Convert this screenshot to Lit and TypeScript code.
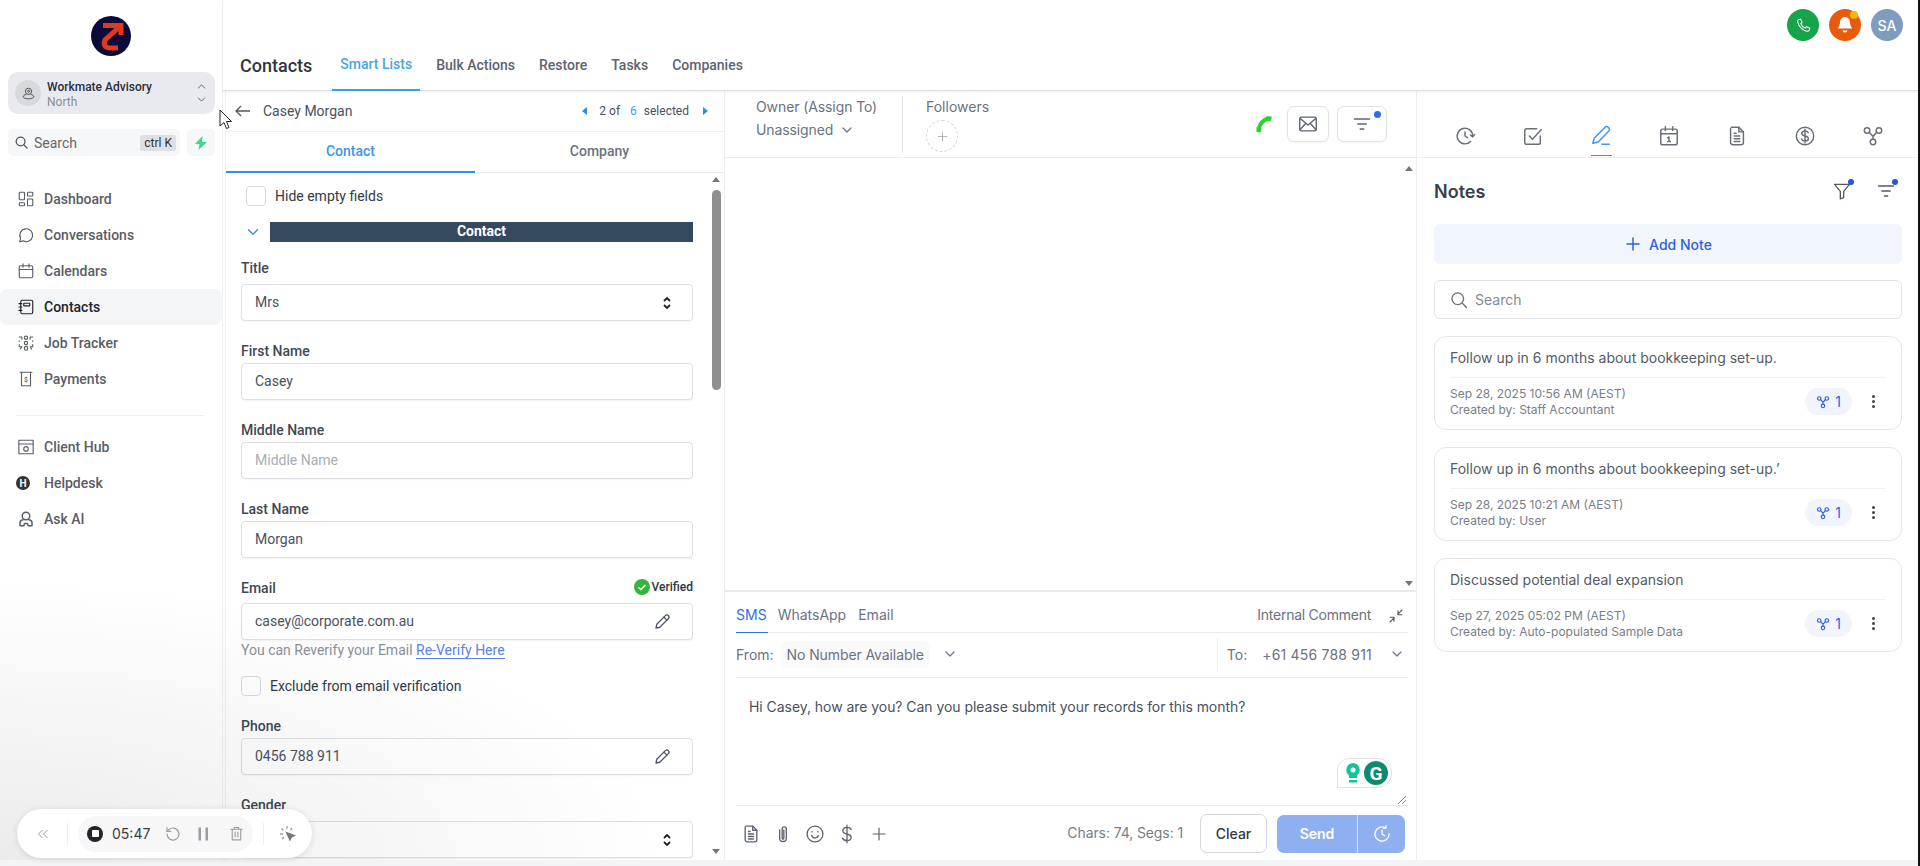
import { LitElement, html, css, svg } from "lit";
import { customElement } from "lit/decorators.js";

const ic = (inner: unknown, size = 16, vb = 24, sw = 1.6) => html`<svg width=${size} height=${size} viewBox="0 0 ${vb} ${vb}" fill="none" stroke="currentColor" stroke-width=${sw} stroke-linecap="round" stroke-linejoin="round">${inner}</svg>`;

const I = {
  dash: svg`<rect x="3" y="3" width="7" height="10" rx="1"/><rect x="14" y="3" width="7" height="5" rx="1"/><rect x="14" y="12" width="7" height="9" rx="1"/><rect x="3" y="17" width="7" height="4" rx="1"/>`,
  chat: svg`<path d="M3.5 21l1.3-4.4A8.6 8.6 0 1 1 8 19.8L3.5 21z"/>`,
  cal: svg`<rect x="3" y="5" width="18" height="16" rx="2"/><path d="M3 10h18M8 2.5V7M16 2.5V7"/>`,
  contacts: svg`<rect x="5" y="3" width="16" height="18" rx="2"/><path d="M2.5 7.5h4M2.5 12h4M2.5 16.5h4"/><rect x="9" y="7" width="8" height="3.5" rx=".5"/>`,
  job: svg`<circle cx="12" cy="5" r="2.2"/><circle cx="12" cy="12" r="2.2"/><rect x="10" y="16.5" width="4" height="5" rx="1.5"/><path d="M3 4h3.5v3M3 10v-1M21 4h-3.5v3M21 10V9M3 14v3h3.5l-2 3M21 14v3h-3.5l2 3"/>`,
  pay: svg`<path d="M4 3h16M6 3v18h12V3"/><text x="12" y="15.5" font-size="9" text-anchor="middle" fill="currentColor" stroke="none" font-family="Roboto">$</text>`,
  hub: svg`<rect x="2.5" y="3" width="19" height="18"/><path d="M2.5 8h19"/><circle cx="12" cy="14.5" r="3"/>`,
  ask: svg`<circle cx="12" cy="8" r="5"/><path d="M8 13c-3 .5-4 2-4 4v4h5l1-3h4l1 3h5v-4c0-2-1-3.500-4-4"/>`,
  search: svg`<circle cx="10.5" cy="10.5" r="7"/><path d="M16 16l5 5"/>`,
  up: svg`<path d="M6 15l6-6 6 6"/>`,
  down: svg`<path d="M6 9l6 6 6-6"/>`,
  pin: svg`<circle cx="12" cy="8.5" r="5"/><circle cx="12" cy="8.5" r="1.6"/><path d="M8 13.500c-2.500.7-4.500 2-4.500 3.500 0 2 3.800 3.500 8.500 3.500s8.500-1.500 8.500-3.500c0-1.500-2-2.800-4.500-3.500"/>`,
  pencil: svg`<path d="M4 20l1-5L16.500 3.500a2.800 2.800 0 0 1 4 4L9 19l-5 1z"/><path d="M14.500 5.500l4 4"/>`,
  mail: svg`<rect x="3" y="4.500" width="18" height="15" rx="2"/><path d="M3.500 6l8.500 7 8.500-7M3.500 18l6-6.500M20.500 18l-6-6.500"/>`,
  sort: svg`<path d="M3 6h18M7 12h10M10 18h4"/>`,
  plus: svg`<path d="M12 4v16M4 12h16"/>`,
  history: svg`<path d="M20.500 12a8.500 8.500 0 1 0-2.400 6"/><path d="M12 7.500V12l3 2M22.500 10.500L20.500 13l-2.500-2"/>`,
  task: svg`<path d="M20 12v7a2 2 0 0 1-2 2H5a2 2 0 0 1-2-2V6a2 2 0 0 1 2-2h11"/><path d="M8 12l3.500 3.500L21 5"/>`,
  pen: svg`<path d="M3 20l1.500-5.500L16 3a2.800 2.800 0 0 1 4.500 3.500L9 18.500 3 20z"/><path d="M13 21h8"/>`,
  calOne: svg`<rect x="3" y="4.500" width="18" height="17" rx="2"/><path d="M3 9.500h18M8 2v4M16 2v4M10.500 14l1.500-1v5M10.500 18h3"/>`,
  doc: svg`<path d="M6 2.500h8l5 5V19a2.500 2.500 0 0 1-2.500 2.500h-9A2.500 2.500 0 0 1 5 19V3.500"/><path d="M14 2.500v5h5M9 12h6M9 15h6M9 18h6M9 9h2"/>`,
  dollar: svg`<circle cx="12" cy="12" r="9.500"/><path d="M15.500 8.500c-.5-1.300-2-2-3.500-2-2 0-3.500 1-3.500 2.700 0 3.800 7.200 1.800 7.200 5.600 0 1.700-1.700 2.700-3.700 2.700-1.600 0-3.200-.8-3.700-2.200M12 4.500v15"/>`,
  graph: svg`<circle cx="5.500" cy="6" r="3"/><circle cx="18.500" cy="6" r="3"/><circle cx="12" cy="18.500" r="3"/><path d="M8 8l3 3.500M16 8l-3 3.500M12 11.500v4"/>`,
  filter: svg`<path d="M3 4h18l-7 8.500V20l-4 1.500v-9L3 4z"/>`,
  phone: svg`<path d="M7 3l2.500 5-2 2c1 2.800 3.700 5.500 6.500 6.500l2-2 5 2.500-1 3c-.5 1.200-1.500 1.500-3 1.300C10 20 4 14 2.700 7c-.2-1.500.1-2.500 1.300-3z" transform="translate(1.200 0)"/>`,
  collapse: svg`<path d="M21 3l-6.500 6.500M15 4v6h6M3 21l6.500-6.500M9 20v-6H3"/>`,
  clip: svg`<path d="M8 7v10a4 4 0 0 0 8 0V6a2.500 2.500 0 0 0-5 0v11a1 1 0 0 0 2 0V7"/>`,
  smile: svg`<circle cx="12" cy="12" r="9.500"/><path d="M8 14c1 2 2.500 3 4 3s3-1 4-3M8.500 9v.5M15.500 9v.5"/>`,
  usd: svg`<path d="M17 6.500C16 4.500 14 4 12 4 9 4 7 5.500 7 8c0 5.500 10 2.500 10 8 0 2.500-2 4-5 4-2.500 0-4.500-1-5.500-3M12 1.500v21"/>`,
  clock: svg`<path d="M20.500 12a8.500 8.500 0 1 1-4-7.200"/><path d="M12 7.500V12l3 2M17 2l-.5 3-3-.2"/>`,
  retry: svg`<path d="M4 12a8 8 0 1 0 2.500-5.800L4 8.500"/><path d="M4 3.500v5h5"/>`,
  trash: svg`<path d="M4 6h16M9 6V3.500h6V6M6 6v15h12V6M10 10v7M14 10v7"/>`,
};

const navTop = [
  ["Dashboard", I.dash], ["Conversations", I.chat], ["Calendars", I.cal],
  ["Contacts", I.contacts], ["Job Tracker", I.job], ["Payments", I.pay],
] as const;
const navBottom = [["Client Hub", I.hub], ["Helpdesk", null], ["Ask AI", I.ask]] as const;

const notes = [
  ["Follow up in 6 months about bookkeeping set-up.", "Sep 28, 2025 10:56 AM (AEST)", "Created by: Staff Accountant"],
  ["Follow up in 6 months about bookkeeping set-up.’", "Sep 28, 2025 10:21 AM (AEST)", "Created by: User"],
  ["Discussed potential deal expansion", "Sep 27, 2025 05:02 PM (AEST)", "Created by: Auto-populated Sample Data"],
];

@customElement("app-root")
export class AppRoot extends LitElement {
  static styles = css`
    :host { display: block; width: 1920px; height: 866px; position: relative; overflow: hidden; background: #111; font-family: Roboto, sans-serif; color: #374151; }
    * { box-sizing: border-box; }
    svg { display: block; flex: none; }
    .app { width: 1918px; height: 866px; display: flex; background: #fff; position: relative; overflow: hidden; }

    .side { width: 223px; flex: none; border-right: 1px solid #f1f1f3; padding-top: 16px; display: flex; flex-direction: column; }
    .logo { align-self: center; width: 40px; height: 40px; }
    .org { margin: 16px 7px 0 8px; height: 42px; background: #e9eaf0; border-radius: 10px; display: flex; align-items: center; padding: 0 8px 0 7px; }
    .org-av { width: 26px; height: 26px; border-radius: 50%; background: #d8d9de; color: #555; display: grid; place-items: center; }
    .org-t { flex: 1; margin-left: 6px; line-height: 15px; padding-top: 3px; }
    .org-n { font-size: 12px; font-weight: 500; color: #2a2f3a; }
    .org-s { font-size: 12px; color: #8a8d95; }
    .org-c { color: #666; display: flex; flex-direction: column; margin-right: -1px; }
    .srow { display: flex; gap: 7px; margin: 15px 7px 0 8px; height: 27px; }
    .sbox { flex: 1; background: #f6f7f9; border-radius: 5px; display: flex; align-items: center; padding: 0 4px 0 6px; color: #555; font-size: 14px; }
    .sbox span.t { flex: 1; margin-left: 5px; color: #666; }
    .kbd { background: #dfe0e5; font-size: 12px; line-height: 16px; padding: 0 4px; color: #333; border-radius: 2px; }
    .bolt { width: 28px; background: #f6f7f9; border-radius: 5px; display: grid; place-items: center; }
    .nav { margin-top: 25px; }
    .item { height: 36px; display: flex; align-items: center; padding-left: 17px; gap: 9px; font-size: 14px; font-weight: 500; color: #5a5d66; }
    .item.on { background: #f4f5f7; color: #20242c; border-radius: 8px; }
    .h { border-radius: 50%; background: #333; color: #fff; font-size: 10px; font-weight: 700; display: grid; place-items: center; flex: none; width: 14px; height: 14px; margin: 0 5px 0 -1px; }
    .sep { height: 1px; background: #eeeff1; margin: 18px 17px 13px 16px; }

    .main { flex: 1; min-width: 0; display: flex; flex-direction: column; }
    .head { height: 91px; flex: none; border-bottom: 1px solid #dcdde0; box-shadow: 0 1px 2px #00000012; position: relative; z-index: 2; background: #fff; }
    .tops { display: flex; justify-content: flex-end; gap: 10px; padding: 9px 15px 0 0; height: 48px; }
    .circ { width: 32px; height: 32px; border-radius: 50%; display: grid; place-items: center; color: #fff; position: relative; font: 500 14px Inter, sans-serif; }
    .badge { position: absolute; width: 8px; height: 8px; border-radius: 50%; background: #f5b50a; top: 2px; right: 3px; }
    .tabs { display: flex; align-items: flex-end; height: 43px; padding-left: 17px; }
    .ttl { font-size: 18px; font-weight: 500; color: #2f3540; align-self: center; margin: 0 20px 0 0; padding-bottom: 9px; }
    .tab { height: 43px; padding: 9px 8px 0; font-size: 14px; font-weight: 500; color: #5d6470; margin-right: 8px; }
    .tab.on { color: #4aa5e0; border-bottom: 2px solid #3b9fe0; padding-top: 8px; margin-right: 8px; }

    .panels { flex: 1; min-height: 0; display: flex; }
    .left { width: 500px; flex: none; margin-left: 2px; border-right: 1px solid #eceef1; border-left: 1px solid #f1f1f3; display: flex; flex-direction: column; position: relative; overflow: hidden; }
    .chead { height: 41px; flex: none; border-bottom: 1px solid #eff0f2; display: flex; align-items: center; padding-left: 9px; color: #4a5160; font-size: 14px; }
    .chead .nm { margin-left: 13px; flex: 1; }
    .pg { display: flex; align-items: center; font-size: 12px; color: #4a5160; margin-right: 16px; gap: 6px; }
    .pg b { font-weight: 400; color: #3b9fe0; margin: 0 1px 0 4px; }
    .tri { width: 0; height: 0; border: 4px solid transparent; }
    .tri.l { border-right: 5px solid #2b8fd8; border-left: 0; margin-right: 6px; }
    .tri.r { border-left: 5px solid #2b8fd8; border-right: 0; margin-left: 8px; }
    .ctabs { height: 41px; flex: none; display: flex; border-bottom: 1px solid #e8e9ec; }
    .ctab { flex: 1; text-align: center; font-size: 14px; font-weight: 500; color: #6b7280; padding-top: 11px; }
    .ctab.on { color: #3b96ef; border-bottom: 2px solid #2f8ff0; margin-bottom: -1px; }
    .form { flex: 1; min-height: 0; padding: 13px 0 0 15px; overflow: hidden; width: 467px; }
    .check { display: flex; align-items: center; gap: 9px; font-size: 14px; color: #333a45; height: 20px; }
    .box { width: 20px; height: 20px; border: 1px solid #d8dade; border-radius: 4px; background: #fff; flex: none; }
    .hide { padding-left: 5px; }
    .sect { margin-top: 16px; display: flex; align-items: center; height: 20px; }
    .sect .cv { width: 29px; padding-left: 3px; color: #2f8ff0; }
    .bar { flex: 1; height: 20px; background: #34485e; color: #fff; font-size: 14px; font-weight: 700; text-align: center; line-height: 19px; }
    .field { margin-top: 20px; }
    .field.first { margin-top: 16px; }
    .lab { font-size: 14px; font-weight: 500; color: #3f4854; line-height: 20px; margin-bottom: 2px; display: flex; justify-content: space-between; }
    .lab.g5 { margin-bottom: 5px; }
    .lab.g6 { margin-bottom: 6px; }
    .verified { display: flex; align-items: center; gap: 2px; font-size: 12px; color: #2f3540; margin-top: -2px; font-weight: 500; }
    .inp { height: 37px; border: 1px solid #dddfe3; border-radius: 4px; display: flex; align-items: center; padding: 0 13px 2px; font-size: 14px; color: #4a5160; box-shadow: 0 1px 2px #0000000d; background: #fff; justify-content: space-between; }
    .inp.ph { color: #a9adb5; }
    .inp .ed { color: #4a5160; margin-right: 8px; margin-top: 2px; }
    .inp .sl { margin-right: 7px; margin-top: 2px; }
    .help { font-size: 14px; color: #8a8f98; line-height: 20px; }
    .help a { color: #5a82e6; border-bottom: 1px solid #5a82e6; }
    .ex { margin-top: 16px; }

    .mid { width: 692px; flex: none; border-right: 1px solid #eceef1; display: flex; flex-direction: column; position: relative; font-family: Inter, sans-serif; }
    .mtop { height: 67px; flex: none; border-bottom: 1px solid #eceef1; display: flex; align-items: flex-start; padding: 5px 29px 0 31px; color: #6b7280; font-size: 14px; }
    .own { width: 147px; height: 57px; border-right: 1px solid #e5e7eb; line-height: 20px; padding-top: 1px; letter-spacing: -.1px; }
    .own .u { margin-top: 3px; display: flex; align-items: center; gap: 6px; }
    .fol { margin-left: 23px; line-height: 20px; padding-top: 1px; flex: 1; }
    .add { width: 32px; height: 32px; margin-top: 3px; border: 1px dashed #d4d6da; border-radius: 50%; display: grid; place-items: center; color: #a4a8af; }
    .tool { display: flex; align-items: center; gap: 8px; margin-top: 10px; }
    .tbtn { height: 36px; border: 1px solid #e0e2e6; border-radius: 7px; display: grid; place-items: center; color: #5d6470; position: relative; box-shadow: 0 1px 2px #0000000d; }
    .tbtn.a { width: 42px; margin-left: 5px; }
    .tbtn.b { width: 50px; }
    .dot { position: absolute; width: 7px; height: 7px; border-radius: 50%; background: #2f6fec; top: 4px; right: 5px; }
    .msgs { flex: 1; min-height: 0; }
    .comp { height: 276px; flex: none; border-top: 2px solid #e8e9ec; display: flex; flex-direction: column; padding: 0 8px 0 11px; font-size: 14px; color: #6b7280; }
    .ctl { height: 41px; flex: none; display: flex; align-items: flex-start; border-bottom: 1px solid #e8e9ec; padding-top: 14px; gap: 10px; }
    .ctl .s { color: #2f6fec; border-bottom: 1px solid #2f6fec; height: 27px; padding-right: 1px; }
    .ctl .em { margin-left: 2px; }
    .grow { flex: 1; }
    .ic { margin: 2px 4px 0 7px; color: #555; }
    .ctl .ic2 { letter-spacing: -.25px; }
    .frm { height: 45px; flex: none; display: flex; align-items: center; border-bottom: 1px solid #e8e9ec; padding-bottom: 2px; }
    .frm .pill { background: #fafafb; padding: 5px 6px; margin: 0 12px 0 7px; border-radius: 6px; letter-spacing: -.1px; }
    .frm .vr { width: 1px; height: 32px; background: #eef0f2; margin-right: 9px; }
    .frm .pill2 { margin: 0 17px 0 15px; letter-spacing: .2px; }
    .text { height: 128px; flex: none; border-bottom: 1px solid #e8e9ec; padding: 20px 0 0 13px; color: #4a5160; letter-spacing: -.05px; }
    .foot { height: 54px; flex: none; display: flex; align-items: center; gap: 8px; padding: 1px 3px 0; color: #5d6470; }
    .foot svg { width: 24px; }
    .chars { margin-left: auto; margin-right: 8px; color: #787d86; font-size: 14px; margin-top: -2px; letter-spacing: -.1px; }
    .clear { width: 67px; height: 39px; border: 1px solid #d5d7dc; border-radius: 7px; display: grid; place-items: center; color: #333a45; font-weight: 500; margin-right: 2px; margin-left: 1px; }
    .send { display: flex; height: 38px; border-radius: 7px; overflow: hidden; background: #8fb0f0; color: #fff; font-weight: 600; }
    .send .a { width: 81px; display: grid; place-items: center; border-right: 1px solid #dbe5fa; }
    .send .b { width: 47px; display: grid; place-items: center; }

    .right { flex: 1; min-width: 0; font-family: Inter, sans-serif; }
    .rtabs { height: 67px; border-bottom: 1px solid #eceef1; display: grid; grid-template-columns: repeat(7, 68px); padding-left: 14px; color: #6b7078; }
    .rt { display: flex; align-items: center; justify-content: center; padding-top: 24px; position: relative; }
    .rt.on { color: #3b96ef; }
    .rt.on::after { content: ""; position: absolute; bottom: 1px; left: 24px; width: 21px; height: 1px; background: #3b96ef; }
    .rbody { padding: 0 16px 0 17px; }
    .nhead { display: flex; align-items: center; height: 32px; margin-top: 17px; color: #555b66; gap: 17px; }
    .nhead .ti { font-size: 18px; font-weight: 600; color: #3a404c; flex: 1; }
    .ni { position: relative; margin-right: 7px; }
    .ni i { position: absolute; width: 6px; height: 6px; border-radius: 50%; background: #2456d8; top: -2px; right: -2px; }
    .addn { height: 40px; margin-top: 17px; background: #f0f5fe; border-radius: 6px; color: #2f62dc; font-size: 14px; font-weight: 500; display: flex; align-items: center; justify-content: center; gap: 7px; }
    .nsearch { height: 39px; margin-top: 16px; border: 1px solid #e0e2e6; border-radius: 6px; display: flex; align-items: center; gap: 6px; padding-left: 14px; color: #6b7078; font-size: 14px; }
    .nsearch span { color: #85898f; }
    .card { margin-top: 17px; height: 94px; border: 1px solid #e3e5e8; border-radius: 12px; padding: 0 15px 0 15px; }
    .nt { height: 41px; border-bottom: 1px solid #f1f2f4; font-size: 14px; line-height: 42px; color: #555b66; white-space: nowrap; }
    .nm2 { display: flex; align-items: center; height: 47px; }
    .mt { flex: 1; font-size: 12px; line-height: 16px; color: #797e87; }
    .chip { width: 47px; height: 27px; border-radius: 14px; background: #f1f4fd; color: #2f62dc; display: flex; align-items: center; justify-content: center; gap: 5px; font-size: 14px; margin-right: 1px; }
    .dots { width: 4px; margin: 0 11px 0 18px; display: flex; flex-direction: column; gap: 2px; align-items: center; }
    .dots i { width: 3px; height: 3px; border-radius: 50%; background: #444; }

    .scroll { position: absolute; left: 486px; top: 99px; width: 9px; height: 200px; background: #8f8f8f; border-radius: 5px; }
    .arr { position: absolute; width: 0; height: 0; border-left: 4.500px solid transparent; border-right: 4.500px solid transparent; }
    .arr.u { border-bottom: 5px solid #777; }
    .arr.d { border-top: 5px solid #777; }
    .shade { position: absolute; left: 0; bottom: 0; width: 700px; height: 300px; pointer-events: none; background: radial-gradient(ellipse at 0% 100%, #00000014, #00000000 68%); }
    .strip { position: absolute; left: 0; right: 0; bottom: 0; height: 6px; background: #f3f4f6; }
    .rec { position: absolute; left: 17px; top: 809px; width: 295px; height: 49px; background: #fff; border-radius: 25px; box-shadow: 0 1px 6px #0000001f; display: flex; align-items: center; padding-left: 20px; color: #9a9da3; font-family: Inter, sans-serif; }
    .rec .l { width: 1px; height: 22px; background: #eceded; }
    .rinner { width: 175px; height: 36px; margin: 0 10px; background: #f7f7f8; border-radius: 18px; display: flex; align-items: center; padding-left: 9px; flex: none; }
    .rstop { width: 16px; height: 16px; background: #23252b; border-radius: 50%; display: grid; place-items: center; flex: none; }
    .rstop i { width: 7px; height: 7px; background: #fff; border-radius: 1px; }
    .time { font-size: 14px; color: #3a3d44; margin: 0 15px 0 9px; width: 37px; flex: none; }
    .rinner svg { margin-right: 14px; }
    .gram { position: absolute; left: 612px; top: 667px; width: 55px; height: 30px; background: #fff; border: 1px solid #e1e3e6; border-radius: 12px 14px 14px 0; display: flex; align-items: center; gap: 3px; padding-left: 7px; }
    .gram .g { width: 24px; height: 24px; border-radius: 50%; background: #0e8a6c; color: #fff; font: 700 19px Roboto, sans-serif; display: grid; place-items: center; }
    .grip { position: absolute; left: 672px; top: 704px; color: #888; }
    .cursor { position: absolute; left: 219px; top: 109px; z-index: 5; }
  `;

  private field(label: string, val: string, opts: { gap?: string; ph?: boolean; edit?: boolean; sel?: boolean; first?: boolean; verified?: boolean } = {}) {
    return html`<div class="field ${opts.first ? "first" : ""}">
      <div class="lab ${opts.gap ?? ""}"><span>${label}</span>${opts.verified ? html`<span class="verified"><svg width="16" height="16" viewBox="0 0 16 16"><circle cx="8" cy="8" r="8" fill="#34b53a"/><path d="M4.500 8.300l2.400 2.300 4.500-4.600" stroke="#fff" stroke-width="1.500" fill="none"/></svg>Verified</span>` : ""}</div>
      <div class="inp ${opts.ph ? "ph" : ""}"><span>${val}</span>
        ${opts.edit ? html`<span class="ed">${ic(I.pencil, 18, 24, 1.7)}</span>` : ""}
        ${opts.sel ? html`<span class="sl"><svg width="10" height="14" viewBox="0 0 10 14" fill="none" stroke="#222" stroke-width="1.800"><path d="M2 5l3-3 3 3M2 9l3 3 3-3"/></svg></span>` : ""}
      </div></div>`;
  }

  render() {
    return html`<div class="app">
      <aside class="side">
        <svg class="logo" viewBox="0 0 40 40"><circle cx="20" cy="20" r="20" fill="#0b0b3b"/><path d="M12 9.500H30V19M30 9.500L14 24Q11 32 20 32H27" fill="none" stroke="#e0391c" stroke-width="5"/></svg>
        <div class="org">
          <div class="org-av">${ic(I.pin, 15)}</div>
          <div class="org-t"><div class="org-n">Workmate Advisory</div><div class="org-s">North</div></div>
          <div class="org-c">${ic(I.up, 13, 24, 1.8)}${ic(I.down, 13, 24, 1.8)}</div>
        </div>
        <div class="srow">
          <div class="sbox">${ic(I.search, 15, 24, 2)}<span class="t">Search</span><span class="kbd">ctrl K</span></div>
          <div class="bolt"><svg width="12" height="14" viewBox="0 0 12 14"><path d="M7.500 0L0 8h4.500L3.500 14 12 6H7z" fill="#3dd68c"/></svg></div>
        </div>
        <nav class="nav">
          ${navTop.map(([n, p]) => html`<div class="item ${n === "Contacts" ? "on" : ""}">${ic(p, 18, 24, 1.5)}<span>${n}</span></div>`)}
          <div class="sep"></div>
          ${navBottom.map(([n, p]) => html`<div class="item">${p ? ic(p, 18, 24, p === I.ask ? 2 : 1.5) : html`<span class="h">H</span>`}<span>${n}</span></div>`)}
        </nav>
      </aside>
      <div class="main">
        <header class="head">
          <div class="tops">
            <div class="circ" style="background:#16a34a">${ic(I.phone, 16)}</div>
            <div class="circ" style="background:#ea5a0c"><svg width="16" height="18" viewBox="0 0 16 18"><path d="M8 1a5 5 0 0 0-5 5c0 4-2 5.500-2 6.500h14c0-1-2-2.500-2-6.500a5 5 0 0 0-5-5zM5.500 14.500h5a2.500 2 0 0 1-5 0z" fill="#fff"/></svg><span class="badge"></span></div>
            <div class="circ" style="background:#7f9cbf">SA</div>
          </div>
          <div class="tabs">
            <div class="ttl">Contacts</div>
            <div class="tab on">Smart Lists</div><div class="tab">Bulk Actions</div><div class="tab">Restore</div><div class="tab">Tasks</div><div class="tab">Companies</div>
          </div>
        </header>
        <div class="panels">
          <section class="left">
            <div class="chead">
              <svg width="15" height="12" viewBox="0 0 15 12" fill="none" stroke="#555" stroke-width="1.300"><path d="M15 6H1M6 1L1 6l5 5"/></svg>
              <span class="nm">Casey Morgan</span>
              <div class="pg"><span class="tri l"></span>2 of <b>6</b> selected<span class="tri r"></span></div>
            </div>
            <div class="ctabs"><div class="ctab on">Contact</div><div class="ctab">Company</div></div>
            <div class="form">
              <label class="check hide"><span class="box"></span>Hide empty fields</label>
              <div class="sect"><span class="cv">${ic(I.down, 18, 24, 1.800)}</span><div class="bar">Contact</div></div>
              ${this.field("Title", "Mrs", { sel: true, first: true, gap: "g6" })}
              ${this.field("First Name", "Casey")}
              ${this.field("Middle Name", "Middle Name", { ph: true })}
              ${this.field("Last Name", "Morgan")}
              ${this.field("Email", "casey@corporate.com.au", { edit: true, gap: "g5", verified: true })}
              <div class="help">You can Reverify your Email <a>Re-Verify Here</a></div>
              <label class="check ex"><span class="box"></span>Exclude from email verification</label>
              ${this.field("Phone", "0456 788 911", { edit: true })}
              ${this.field("Gender", "", { sel: true, gap: "g6" })}
            </div>
            <div class="arr u" style="left:486px;top:86px"></div>
            <div class="scroll"></div>
            <div class="arr d" style="left:486px;top:758px"></div>
          </section>
          <section class="mid">
            <div class="mtop">
              <div class="own">Owner (Assign To)<div class="u">Unassigned ${ic(I.down, 16, 24, 1.8)}</div></div>
              <div class="fol">Followers<div class="add">${ic(I.plus, 13, 24, 1.500)}</div></div>
              <div class="tool">
                <svg width="20" height="20" viewBox="0 0 20 20" fill="none"><path d="M5 16C5 10.500 9 5.500 15 4.500" stroke="#2ed12e" stroke-width="4" stroke-linecap="round"/><path d="M2.500 13l5 1.500-.8 4-4.200-.5zM12.500 2l5.500 .8-1.200 4.300-4-.8z" fill="#2ed12e"/></svg>
                <div class="tbtn a">${ic(I.mail, 22, 24, 1.5)}</div>
                <div class="tbtn b">${ic(I.sort, 20, 24, 2)}<span class="dot"></span></div>
              </div>
            </div>
            <div class="msgs"></div>
            <div class="comp">
              <div class="ctl"><span class="s">SMS</span><span>WhatsApp</span><span class="em">Email</span><span class="grow"></span><span class="ic2">Internal Comment</span><span class="ic">${ic(I.collapse, 16)}</span></div>
              <div class="frm"><span>From:</span><span class="pill">No Number Available</span>${ic(I.down, 16, 24, 1.8)}<span class="grow"></span><span class="vr"></span><span>To:</span><span class="pill2">+61 456 788 911</span>${ic(I.down, 16, 24, 1.8)}<span style="width:3px"></span></div>
              <div class="text">Hi Casey, how are you? Can you please submit your records for this month?</div>
              <div class="foot">
                ${ic(I.doc, 20)}${ic(I.clip, 20)}${ic(I.smile, 20)}${ic(I.usd, 20)}${ic(I.plus, 18)}
                <span class="chars">Chars: 74, Segs: 1</span>
                <div class="clear">Clear</div>
                <div class="send"><div class="a">Send</div><div class="b">${ic(I.clock, 20)}</div></div>
              </div>
            </div>
            <div class="arr u" style="left:680px;top:75px"></div>
            <div class="arr d" style="left:680px;top:490px"></div>
            <div class="gram">
              <svg width="16" height="24" viewBox="0 0 16 24"><path d="M8 2a7 7 0 0 0-4 12.500V17h8v-2.500A7 7 0 0 0 8 2z" fill="#15c39a"/><circle cx="8" cy="9" r="2.500" fill="#fff"/><rect x="4" y="19" width="8" height="2.500" fill="#15c39a"/></svg>
              <span class="g">G</span>
            </div>
            <svg class="grip" width="10" height="10" viewBox="0 0 10 10" stroke="currentColor"><path d="M1 9l8-8M5 9l4-4"/></svg>
          </section>
          <section class="right">
            <div class="rtabs">
              <div class="rt">${ic(I.history, 22)}</div><div class="rt">${ic(I.task, 22)}</div><div class="rt on">${ic(I.pen, 22)}</div><div class="rt">${ic(I.calOne, 22)}</div><div class="rt">${ic(I.doc, 22)}</div><div class="rt">${ic(I.dollar, 22)}</div><div class="rt">${ic(I.graph, 22)}</div>
            </div>
            <div class="rbody">
              <div class="nhead"><span class="ti">Notes</span><span class="ni">${ic(I.filter, 20)}<i></i></span><span class="ni" style="margin-right:6px">${ic(I.sort, 20)}<i></i></span></div>
              <div class="addn">${ic(I.plus, 18, 24, 2)}Add Note</div>
              <div class="nsearch">${ic(I.search, 20)}<span>Search</span></div>
              ${notes.map(([t, d, c]) => html`<div class="card"><div class="nt">${t}</div><div class="nm2"><div class="mt"><div>${d}</div><div>${c}</div></div><div class="chip">${ic(I.graph, 14, 24, 2)}1</div><div class="dots"><i></i><i></i><i></i></div></div></div>`)}
            </div>
          </section>
        </div>
      </div>
      <div class="shade"></div>
      <div class="strip"></div>
      <div class="rec">
        <svg width="12" height="10" viewBox="0 0 12 10" fill="none" stroke="currentColor" style="margin-right:18px"><path d="M5.500 1L1.500 5l4 4M10.500 1l-4 4 4 4"/></svg>
        <span class="l"></span>
        <div class="rinner">
          <span class="rstop"><i></i></span><span class="time">05:47</span>
          ${ic(I.retry, 18)}
          <svg width="16" height="16" viewBox="0 0 16 16" fill="#9a9da3" style="margin-right:16px"><rect x="2.500" y="1.500" width="2.500" height="13"/><rect x="9.500" y="1.500" width="2.500" height="13"/></svg>
          ${ic(I.trash, 17)}
        </div>
        <span class="l"></span>
        <svg width="18" height="18" viewBox="0 0 18 18" fill="none" stroke="currentColor" stroke-width="1.300" style="margin-left:15px"><path d="M8 1v3M2.500 3.500l2 2M1 9h3M3 14l2-2M13 3l-1.500 2"/><path d="M7.500 7.500l8 3-3 1.500-1.500 3z" fill="#777" stroke="#777"/></svg>
      </div>
      <svg class="cursor" width="14" height="22" viewBox="0 0 14 22"><path d="M1 1v16l4-3.500 2.500 6 2.500-1-2.500-6h5z" fill="#fff" stroke="#222" stroke-width="1"/></svg>
    </div>`;
  }
}
